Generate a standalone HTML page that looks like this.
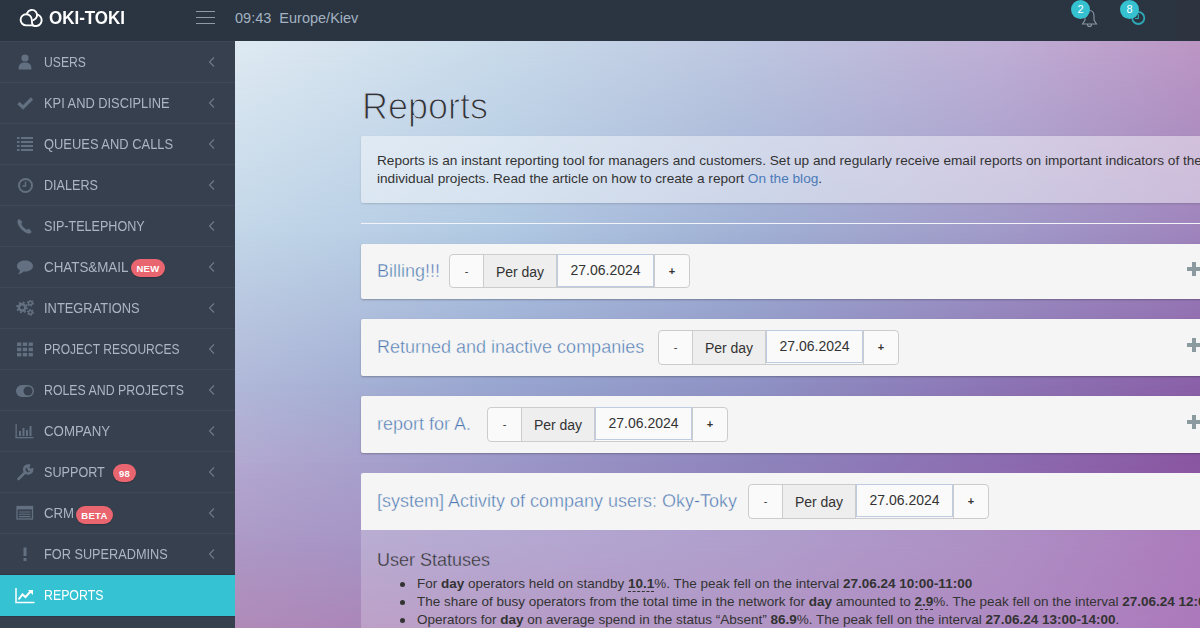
<!DOCTYPE html>
<html><head><meta charset="utf-8">
<style>
*{box-sizing:border-box;margin:0;padding:0}
html,body{width:1200px;height:628px;overflow:hidden;font-family:"Liberation Sans",sans-serif}
body{position:relative;background:#36404e}
#hdr{position:absolute;left:0;top:0;width:1200px;height:41px;background:#2a3541}
#hdr .rt{position:absolute;left:1175px;top:0;width:25px;height:40px;background:#2d3440}
#logo{position:absolute;left:49px;top:7px;color:#fff;font-weight:bold;font-size:18.5px;transform:scaleX(0.917);transform-origin:0 0}
#ham{position:absolute;left:196px;top:11px;width:19px;height:13px}
#ham i{position:absolute;left:0;width:19px;height:1px;background:#8f9aa6}
#time{position:absolute;left:235px;top:10px;color:#a3b2c1;font-size:14.5px;white-space:nowrap}
.nb{position:absolute;width:19px;height:19px;border-radius:50%;background:#36c1d0;color:#fff;font-size:11px;text-align:center;line-height:19px}
#side{position:absolute;left:0;top:41px;width:235px;height:587px;background:#36404e}
#main{position:absolute;left:235px;top:41px;width:965px;height:587px;overflow:hidden;
}
.bg{position:absolute;left:0;top:0;width:965px;height:587px}
.item{position:absolute;left:0;width:235px;height:41px;border-top:1px solid #3e4856;color:#abb6c3;font-size:14px}
.item .t{position:absolute;left:44px;top:12px;white-space:nowrap;transform-origin:0 0;font-size:14.5px}
.item .arr{position:absolute;left:208px;top:15px;width:7px;height:10px}
.item svg.ic{position:absolute;left:15px;top:12px;width:20px;height:17px}
.badge{position:absolute;background:#e9656f;color:#fff;font-weight:bold;font-size:9.5px;letter-spacing:0.3px;border-radius:9px;height:18px;line-height:20px;text-align:center;box-shadow:0 1px 1px rgba(0,0,0,0.2)}
.item.active{background:#35c3d3;color:#fff;border-top:1px solid #2f3845;height:42px}
#ttl{position:absolute;left:127px;top:44.5px;font-size:36px;color:#333;-webkit-text-stroke:1.1px #c9d9eb;white-space:nowrap}
#info{position:absolute;left:126px;top:95px;width:900px;height:67px;background:rgba(255,255,255,0.45);border-radius:2px;box-shadow:0 1px 2px rgba(0,0,0,0.15);font-size:13.65px;color:#333;line-height:18px;padding:16px 16px;white-space:nowrap}
#info a{color:#4a7ab8;text-decoration:none}
#hr{position:absolute;left:126px;top:182px;width:900px;height:1px;background:#f2f4f8}
.pnl{position:absolute;left:126px;width:900px;background:#f5f5f5;border-radius:2px;box-shadow:0 1px 2px rgba(0,0,0,0.25)}
.pnl .nm{position:absolute;left:16px;font-size:18px;color:#4f79b3;white-space:nowrap;-webkit-text-stroke:0.4px #f5f5f5}
.grp{position:absolute;height:35px;border:1px solid #ccc;border-radius:4px;background:#fafafa;font-size:14px;color:#333}
.grp div{position:absolute;top:0;height:100%;text-align:center}
.grp .m{left:0;width:33px;line-height:33px;font-size:11px}
.grp .pd{left:33px;width:74px;background:#eee;border-left:1px solid #ccc;border-right:1px solid #ccc;line-height:35px}
.grp .dt{left:107px;width:97px;background:#fafafa;border:1px solid #bfcbe0;top:-1px;height:33px;line-height:30px}
.grp .p{left:204px;width:35px;line-height:33px;border-left:1px solid #ccc;font-size:11px;font-weight:bold}
.plus{position:absolute;left:952px;width:14px;height:14px}
.plus:before{content:"";position:absolute;left:0;top:5px;width:14px;height:3.5px;background:#8a9a9e}
.plus:after{content:"";position:absolute;left:5px;top:0;width:3.5px;height:14px;background:#8a9a9e}
#body4{position:absolute;left:126px;top:488.5px;width:900px;height:100px;background:rgba(255,255,255,0.22)}
#us{position:absolute;left:16px;top:20.5px;font-size:18px;color:#333;-webkit-text-stroke:0.35px #b9aad2}
#body4 ul{position:absolute;left:56px;top:45px;font-size:13.5px;color:#333;line-height:18px;white-space:nowrap;list-style:none}
#body4 li{position:relative}
#body4 li:before{content:"";position:absolute;left:-17px;top:7px;width:5px;height:5px;border-radius:50%;background:#333}
.dash{border-bottom:1px dashed #333}
</style></head><body>
<div id="hdr">
  <div class="rt"></div>
  <svg style="position:absolute;left:0;top:0" width="50" height="32" viewBox="0 0 50 32"><g fill="none" stroke="#fff" stroke-width="1.9" stroke-linecap="round">
    <path d="M33 25.4 H26.2 A5.6 5.6 0 1 1 31.8 19.8 C31.8 22.5 32.2 24.5 33 25.4"/>
    <path d="M27.1 13.1 A5.2 5.2 0 1 1 33.4 20.1"/>
    <path d="M38.6 15 A5.2 5.2 0 1 1 33 25.3"/>
  </g></svg>
  <div id="logo">OKI-TOKI</div>
  <div id="ham"><i style="top:0"></i><i style="top:6px"></i><i style="top:12px"></i></div>
  <div id="time">09:43&nbsp;&nbsp;Europe/Kiev</div>
  <svg style="position:absolute;left:1081px;top:9px" width="17" height="19" viewBox="0 0 17 19"><path d="M8.5 1.5 C5 1.5 4 4.5 4 7 V11 L1.5 15 H15.5 L13 11 V7 C13 4.5 12 1.5 8.5 1.5 Z M6.5 15.5 A2 2 0 0 0 10.5 15.5" fill="none" stroke="#8a96a3" stroke-width="1.1"/></svg>
  <div class="nb" style="left:1071px;top:0px">2</div>
  <svg style="position:absolute;left:1130px;top:10px" width="17" height="17" viewBox="0 0 17 17"><circle cx="8.3" cy="8" r="6" fill="none" stroke="#2ea7b7" stroke-width="1.8"/><path d="M8.3 4 V8.5 H5" fill="none" stroke="#2ea7b7" stroke-width="1.2"/></svg>
  <div class="nb" style="left:1120px;top:0px">8</div>
</div>
<div id="side">
<div class="item" style="top:0"><svg class="ic" viewBox="0 0 20 17"><g fill="#637081"><circle cx="10" cy="4" r="3.6"/><path d="M3.5 15.5 C3.5 10 6 8.5 10 8.5 C14 8.5 16.5 10 16.5 15.5 Z"/></g></svg><span class="t" style="transform:scaleX(0.839)">USERS</span><svg class="arr" viewBox="0 0 7 10"><path d="M6 0.5 L1.5 5 L6 9.5" fill="none" stroke="#6f7b8a" stroke-width="1.1"/></svg></div>
<div class="item" style="top:41px"><svg class="ic" viewBox="0 0 20 17"><path d="M3.5 8 L8 12.5 L17 3.5" fill="none" stroke="#637081" stroke-width="3.2"/></svg><span class="t" style="transform:scaleX(0.886)">KPI AND DISCIPLINE</span><svg class="arr" viewBox="0 0 7 10"><path d="M6 0.5 L1.5 5 L6 9.5" fill="none" stroke="#6f7b8a" stroke-width="1.1"/></svg></div>
<div class="item" style="top:82px"><svg class="ic" viewBox="0 0 20 17"><g fill="#637081"><rect x="2" y="1" width="2.5" height="2"/><rect x="6" y="1" width="12" height="2"/><rect x="2" y="5" width="2.5" height="2"/><rect x="6" y="5" width="12" height="2"/><rect x="2" y="9" width="2.5" height="2"/><rect x="6" y="9" width="12" height="2"/><rect x="2" y="13" width="2.5" height="2"/><rect x="6" y="13" width="12" height="2"/></g></svg><span class="t" style="transform:scaleX(0.89)">QUEUES AND CALLS</span><svg class="arr" viewBox="0 0 7 10"><path d="M6 0.5 L1.5 5 L6 9.5" fill="none" stroke="#6f7b8a" stroke-width="1.1"/></svg></div>
<div class="item" style="top:123px"><svg class="ic" viewBox="0 0 20 17"><g fill="none" stroke="#637081"><circle cx="10.5" cy="8.5" r="6.5" stroke-width="2"/><path d="M10.5 4.5 V9 H7.5" stroke-width="1.5"/></g></svg><span class="t" style="transform:scaleX(0.868)">DIALERS</span><svg class="arr" viewBox="0 0 7 10"><path d="M6 0.5 L1.5 5 L6 9.5" fill="none" stroke="#6f7b8a" stroke-width="1.1"/></svg></div>
<div class="item" style="top:164px"><svg class="ic" viewBox="0 0 20 17"><path d="M4 1 C3 1.5 2.2 2.8 2.5 4.5 C3.5 9 8 14 12.8 15.5 C14.5 16 16 15 16.8 14 L14.2 10.8 C13.5 10.5 12.5 11.5 11.8 11.8 C9.8 11 7.2 8 6.3 6 C6.5 5.2 7.5 4.5 7.3 3.8 Z" fill="#637081"/></svg><span class="t" style="transform:scaleX(0.868)">SIP-TELEPHONY</span><svg class="arr" viewBox="0 0 7 10"><path d="M6 0.5 L1.5 5 L6 9.5" fill="none" stroke="#6f7b8a" stroke-width="1.1"/></svg></div>
<div class="item" style="top:205px"><svg class="ic" viewBox="0 0 20 17"><path d="M10 1.5 C5 1.5 2 4 2 7 C2 9 3.2 10.5 5 11.3 C4.8 13 3.8 14.5 2.8 15.3 C5.5 15 7.5 13.5 8.5 12.4 C9 12.5 9.5 12.5 10 12.5 C15 12.5 18 10 18 7 C18 4 15 1.5 10 1.5 Z" fill="#637081"/></svg><span class="t" style="transform:scaleX(0.922)">CHATS&amp;MAIL</span><div class="badge" style="left:131px;top:12px;width:34px">NEW</div><svg class="arr" viewBox="0 0 7 10"><path d="M6 0.5 L1.5 5 L6 9.5" fill="none" stroke="#6f7b8a" stroke-width="1.1"/></svg></div>
<div class="item" style="top:246px"><svg class="ic" viewBox="0 0 20 17"><g fill="none" stroke="#637081"><circle cx="7.1" cy="7.4" r="3.2" stroke-width="2.6"/><circle cx="7.1" cy="7.4" r="5" stroke-width="1.8" stroke-dasharray="1.9 2.03"/><circle cx="15.4" cy="3.1" r="1.9" stroke-width="1.5"/><circle cx="15.4" cy="3.1" r="3" stroke-width="1.2" stroke-dasharray="1.4 1.74"/><circle cx="15.4" cy="12.3" r="1.9" stroke-width="1.5"/><circle cx="15.4" cy="12.3" r="3" stroke-width="1.2" stroke-dasharray="1.4 1.74"/></g></svg><span class="t" style="transform:scaleX(0.888)">INTEGRATIONS</span><svg class="arr" viewBox="0 0 7 10"><path d="M6 0.5 L1.5 5 L6 9.5" fill="none" stroke="#6f7b8a" stroke-width="1.1"/></svg></div>
<div class="item" style="top:287px"><svg class="ic" viewBox="0 0 20 17"><g fill="#637081"><rect x="2" y="1.5" width="4.3" height="3.5"/><rect x="7.8" y="1.5" width="4.3" height="3.5"/><rect x="13.6" y="1.5" width="4.3" height="3.5"/><rect x="2" y="6.7" width="4.3" height="3.5"/><rect x="7.8" y="6.7" width="4.3" height="3.5"/><rect x="13.6" y="6.7" width="4.3" height="3.5"/><rect x="2" y="11.9" width="4.3" height="3.5"/><rect x="7.8" y="11.9" width="4.3" height="3.5"/><rect x="13.6" y="11.9" width="4.3" height="3.5"/></g></svg><span class="t" style="transform:scaleX(0.83)">PROJECT RESOURCES</span><svg class="arr" viewBox="0 0 7 10"><path d="M6 0.5 L1.5 5 L6 9.5" fill="none" stroke="#6f7b8a" stroke-width="1.1"/></svg></div>
<div class="item" style="top:328px"><svg class="ic" viewBox="0 0 20 17"><rect x="1" y="3" width="18" height="12" rx="6" fill="#637081"/><circle cx="13" cy="9" r="4.5" fill="#36404e"/></svg><span class="t" style="transform:scaleX(0.851)">ROLES AND PROJECTS</span><svg class="arr" viewBox="0 0 7 10"><path d="M6 0.5 L1.5 5 L6 9.5" fill="none" stroke="#6f7b8a" stroke-width="1.1"/></svg></div>
<div class="item" style="top:369px"><svg class="ic" viewBox="0 0 20 17"><g fill="#637081"><rect x="0.5" y="1" width="1.3" height="14"/><rect x="0.5" y="14" width="18" height="1.3"/><rect x="4" y="8" width="2" height="5"/><rect x="7.5" y="5" width="2" height="8"/><rect x="11" y="7" width="2" height="6"/><rect x="14.5" y="3" width="2" height="10"/></g></svg><span class="t" style="transform:scaleX(0.915)">COMPANY</span><svg class="arr" viewBox="0 0 7 10"><path d="M6 0.5 L1.5 5 L6 9.5" fill="none" stroke="#6f7b8a" stroke-width="1.1"/></svg></div>
<div class="item" style="top:410px"><svg class="ic" viewBox="0 0 20 17"><path d="M3.5 15 L10.5 8 M13.8 1.5 A4 4 0 1 0 17.2 5.5 L14.3 6 L13 3.5 Z" fill="none" stroke="#637081" stroke-width="2.6" stroke-linecap="round"/></svg><span class="t" style="transform:scaleX(0.871)">SUPPORT</span><div class="badge" style="left:113px;top:12px;width:23px">98</div><svg class="arr" viewBox="0 0 7 10"><path d="M6 0.5 L1.5 5 L6 9.5" fill="none" stroke="#6f7b8a" stroke-width="1.1"/></svg></div>
<div class="item" style="top:451px"><svg class="ic" viewBox="0 0 20 17"><g fill="none" stroke="#637081"><rect x="2" y="1.5" width="15.5" height="12.5" stroke-width="1.3"/><path d="M2 3.2 H17.5" stroke-width="2.5"/><path d="M4 7 H15.5 M4 9.3 H15.5 M4 11.6 H15.5" stroke-width="1.1"/></g></svg><span class="t" style="transform:scaleX(0.913)">CRM</span><div class="badge" style="left:76px;top:13px;width:37px">BETA</div><svg class="arr" viewBox="0 0 7 10"><path d="M6 0.5 L1.5 5 L6 9.5" fill="none" stroke="#6f7b8a" stroke-width="1.1"/></svg></div>
<div class="item" style="top:492px"><svg class="ic" viewBox="0 0 20 17"><g fill="#637081"><rect x="8.5" y="1.5" width="3" height="8.5"/><rect x="8.5" y="12" width="3" height="3"/></g></svg><span class="t" style="transform:scaleX(0.878)">FOR SUPERADMINS</span><svg class="arr" viewBox="0 0 7 10"><path d="M6 0.5 L1.5 5 L6 9.5" fill="none" stroke="#6f7b8a" stroke-width="1.1"/></svg></div>
<div class="item active" style="top:533px"><svg class="ic" viewBox="0 0 20 17"><g fill="none" stroke="#fff"><path d="M1 1 V15.5 H19.5" stroke-width="1.5"/><path d="M3.5 12.5 L7.5 7.5 L10.5 10 L16 4" stroke-width="2"/></g><path d="M13 3 H18 V8 Z" fill="#fff"/></svg><span class="t" style="transform:scaleX(0.851)">REPORTS</span></div>
<div style="position:absolute;left:0;top:575px;width:235px;height:12px;border-top:1px solid #2f3845"></div>
</div>
<div id="main">
<div class="bg" style="background:linear-gradient(to right,#dde9f2 5px,#c8daea 265px,#bcc6e0 515px,#beaed5 765px,#bb95c4 965px)"></div>
<div class="bg" style="background:linear-gradient(to right,#c2d6e8 5px,#b0c8e2 265px,#a0b0d4 515px,#a09ac8 765px,#9e84bc 965px);-webkit-mask-image:linear-gradient(to bottom,transparent 9px,#000 192px);mask-image:linear-gradient(to bottom,transparent 9px,#000 192px)"></div>
<div class="bg" style="background:linear-gradient(to right,#b0b8d8 5px,#98a6d0 265px,#8e92c4 515px,#8c74b4 765px,#8a60a8 965px);-webkit-mask-image:linear-gradient(to bottom,transparent 192px,#000 344px);mask-image:linear-gradient(to bottom,transparent 192px,#000 344px)"></div>
<div class="bg" style="background:linear-gradient(to right,#b2a8d0 5px,#9c98c8 265px,#8e84bc 515px,#8c6cb0 765px,#8a56a2 965px);-webkit-mask-image:linear-gradient(to bottom,transparent 344px,#000 422px);mask-image:linear-gradient(to bottom,transparent 344px,#000 422px)"></div>
<div class="bg" style="background:linear-gradient(to right,#ac98c6 5px,#a090c4 265px,#9a83be 515px,#9870b4 765px,#9557a9 965px);-webkit-mask-image:linear-gradient(to bottom,transparent 422px,#000 504px);mask-image:linear-gradient(to bottom,transparent 422px,#000 504px)"></div>
<div class="bg" style="background:linear-gradient(to right,#b08ab8 5px,#a482b8 265px,#9c78b4 515px,#9868b0 765px,#9454a8 965px);-webkit-mask-image:linear-gradient(to bottom,transparent 504px,#000 587px);mask-image:linear-gradient(to bottom,transparent 504px,#000 587px)"></div>
<div id="ttl">Reports</div>
<div id="info">Reports is an instant reporting tool for managers and customers. Set up and regularly receive email reports on important indicators of the company and<br>individual projects. Read the article on how to create a report <a>On the blog</a>.</div>
<div id="hr"></div>
<div class="pnl" style="top:203px;height:55px"><div class="nm" style="top:17px">Billing!!!</div>
 <div class="grp" style="left:88px;top:10px;width:241px;height:33.5px"><div class="m">-</div><div class="pd">Per day</div><div class="dt">27.06.2024</div><div class="p">+</div></div><div class="plus" style="top:18px;left:826px"></div></div>
<div class="pnl" style="top:278px;height:56.5px"><div class="nm" style="top:18px">Returned and inactive companies</div>
 <div class="grp" style="left:297px;top:10.5px;width:241px"><div class="m">-</div><div class="pd">Per day</div><div class="dt">27.06.2024</div><div class="p">+</div></div><div class="plus" style="top:19px;left:826px"></div></div>
<div class="pnl" style="top:355px;height:56.5px"><div class="nm" style="top:18px">report for A.</div>
 <div class="grp" style="left:126px;top:10.5px;width:241px"><div class="m">-</div><div class="pd">Per day</div><div class="dt">27.06.2024</div><div class="p">+</div></div><div class="plus" style="top:19px;left:826px"></div></div>
<div class="pnl" style="top:432px;height:56.5px;border-radius:2px 2px 0 0;box-shadow:none"><div class="nm" style="top:18px">[system] Activity of company users: Oky-Toky</div>
 <div class="grp" style="left:387px;top:10.5px;width:241px"><div class="m">-</div><div class="pd">Per day</div><div class="dt">27.06.2024</div><div class="p">+</div></div></div>
<div id="body4"><div id="us">User Statuses</div>
<ul>
<li>For <b>day</b> operators held on standby <b class="dash">10.1</b>%. The peak fell on the interval <b>27.06.24 10:00-11:00</b></li>
<li>The share of busy operators from the total time in the network for <b>day</b> amounted to <b class="dash">2.9</b>%. The peak fell on the interval <b>27.06.24 12:00-13:00</b></li>
<li>Operators for <b>day</b> on average spend in the status “Absent” <b>86.9</b>%. The peak fell on the interval <b>27.06.24 13:00-14:00</b>.</li>
</ul></div>
</div>
</body></html>
